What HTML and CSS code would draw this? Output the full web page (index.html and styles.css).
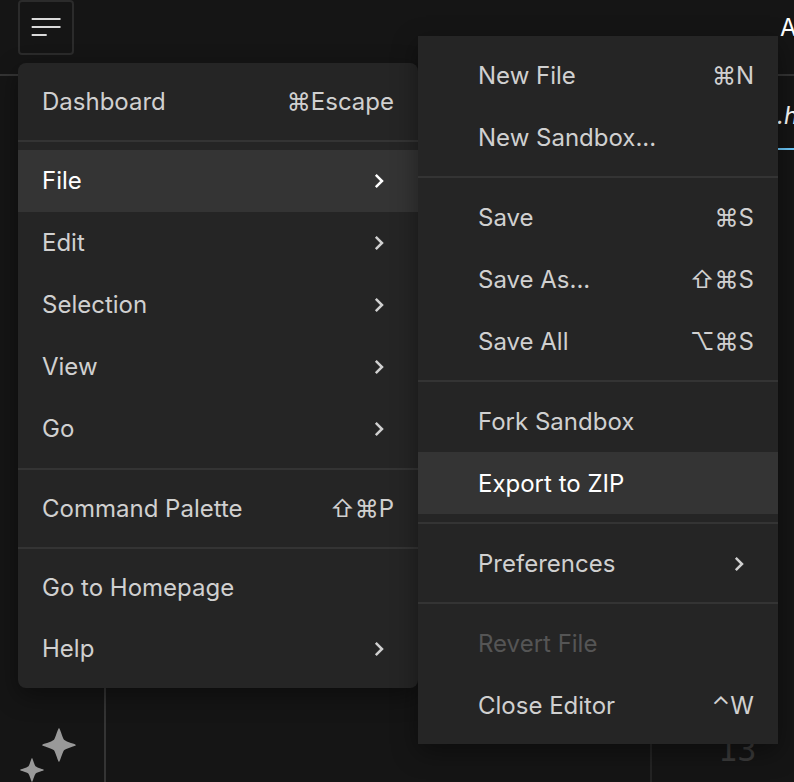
FILE: index.html
```html
<!DOCTYPE html>
<html lang="en">
<head>
<meta charset="utf-8">
<title>Sandbox editor</title>
<link rel="stylesheet" href="styles.css">
</head>
<body>
<svg class="sprite" aria-hidden="true">
  <symbol id="chevron" viewBox="0 0 10 16"><path d="M1.800 1.800 8 8l-6.200 6.200" fill="none" stroke="currentColor" stroke-width="2.500"/></symbol>
</svg>
<div class="app">
  <header class="topbar">
    <button class="menu-button" type="button" aria-label="Menu" aria-expanded="true">
      <svg viewBox="0 0 30 20" width="30" height="20"><path d="M.7 1h28.800M.7 9h28.800M.7 17h15" stroke="currentColor" stroke-width="2"/></svg>
    </button>
    <span class="topbar__title">A</span>
  </header>
  <main class="workspace">
    <aside class="activity">
      <svg class="sparkles" viewBox="0 0 60 56" width="60" height="56" fill="currentColor">
        <path d="M41 0c.9 0 3.200 9 5 11.700C48.500 14 58 16 58 17s-9.500 3-12 5.300C44.200 25 41.900 34 41 34s-3.200-9-5-11.700C33.500 20 24 18 24 17s9.500-3 12-5.300C37.800 9 40.100 0 41 0Z"/>
        <path d="M14 30c.6 0 2.200 6.400 3.500 8.300C19.300 39.900 26 41.300 26 42s-6.700 2.100-8.500 3.700C16.200 47.600 14.600 54 14 54s-2.200-6.400-3.500-8.300C8.700 44.100 2 42.700 2 42s6.700-2.100 8.500-3.700C11.800 36.400 13.400 30 14 30Z"/>
      </svg>
    </aside>
    <section class="explorer"></section>
    <section class="editor">
      <div class="tabs"><span class="tab">index.html</span></div>
      <div class="code"><span class="line-number">13</span></div>
    </section>
  </main>

  <nav class="menu menu--main" aria-label="Main menu">
    <div class="group">
      <button class="item" type="button">Dashboard<kbd>⌘Escape</kbd></button>
    </div>
    <div class="group">
      <button class="item item--parent item--active" type="button">File<svg class="chevron"><use href="#chevron"/></svg></button>
      <button class="item item--parent" type="button">Edit<svg class="chevron"><use href="#chevron"/></svg></button>
      <button class="item item--parent" type="button">Selection<svg class="chevron"><use href="#chevron"/></svg></button>
      <button class="item item--parent" type="button">View<svg class="chevron"><use href="#chevron"/></svg></button>
      <button class="item item--parent" type="button">Go<svg class="chevron"><use href="#chevron"/></svg></button>
    </div>
    <div class="group">
      <button class="item" type="button">Command Palette<kbd>⇧⌘P</kbd></button>
    </div>
    <div class="group">
      <button class="item" type="button">Go to Homepage</button>
      <button class="item item--parent" type="button">Help<svg class="chevron"><use href="#chevron"/></svg></button>
    </div>
  </nav>

  <nav class="menu menu--sub" aria-label="File">
    <div class="group">
      <button class="item" type="button">New File<kbd>⌘N</kbd></button>
      <button class="item" type="button">New Sandbox...</button>
    </div>
    <div class="group">
      <button class="item" type="button">Save<kbd>⌘S</kbd></button>
      <button class="item" type="button">Save As...<kbd>⇧⌘S</kbd></button>
      <button class="item" type="button">Save All<kbd>⌥⌘S</kbd></button>
    </div>
    <div class="group">
      <button class="item" type="button">Fork Sandbox</button>
      <button class="item item--active" type="button">Export to ZIP</button>
    </div>
    <div class="group">
      <button class="item item--parent" type="button">Preferences<svg class="chevron"><use href="#chevron"/></svg></button>
    </div>
    <div class="group">
      <button class="item" type="button" disabled>Revert File</button>
      <button class="item" type="button">Close Editor<kbd>⌃W</kbd></button>
    </div>
  </nav>
</div>
</body>
</html>
```
FILE: styles.css
```css
* { box-sizing: border-box; }

body {
  margin: 0;
  background: #151515;
  color: #d4d4d4;
  font: 24px/32px Inter, "Liberation Sans", sans-serif;
}

.sprite { display: none; }

.app {
  position: relative;
  display: flex;
  flex-direction: column;
  height: 100vh;
  overflow: hidden;
}

.topbar {
  display: flex;
  flex: none;
  align-items: flex-start;
  justify-content: space-between;
  height: 76px;
  padding-left: 18px;
  border-bottom: 2px solid #343434;
}

.menu-button {
  display: grid;
  place-items: center;
  width: 56px;
  height: 55px;
  padding: 0;
  border: 2px solid #2b2b2b;
  border-radius: 4px;
  background: none;
  color: #d9d9d9;
}

.topbar__title {
  width: 14px;
  padding-top: 12px;
  color: #fff;
  white-space: nowrap;
}

.workspace {
  display: grid;
  flex: 1;
  grid-template-columns: 106px 546px 1fr;
  min-height: 0;
}

.activity {
  display: flex;
  align-items: flex-end;
  padding-left: 18px;
  border-right: 2px solid #343434;
  color: #999;
}

.sparkles { display: block; margin-bottom: -2px; }

.explorer { border-right: 2px solid #242424; }

.editor {
  display: flex;
  flex-direction: column;
  justify-content: space-between;
  min-width: 0;
  overflow: hidden;
}

.tabs {
  height: 74px;
  padding: 24px 0 0 64px;
  border-bottom: 2px solid #6cc8fa;
  color: #fff;
  font-style: italic;
  white-space: nowrap;
}

.code {
  padding: 0 0 14px 66px;
  color: #3a3a3a;
  font: 32px/36px "DejaVu Sans Mono", monospace;
}

.menu {
  position: absolute;
  padding: 8px 0;
  background: #252525;
  box-shadow: 0 8px 24px rgba(0, 0, 0, .4);
}

.menu--main {
  top: 63px;
  left: 18px;
  width: 400px;
  border-radius: 8px;
}

.menu--sub {
  top: 36px;
  left: 418px;
  width: 360px;
}

.group + .group {
  margin-top: 8px;
  padding-top: 8px;
  border-top: 2px solid #343434;
}

.item {
  display: flex;
  align-items: center;
  justify-content: space-between;
  width: 100%;
  height: 61px;
  padding: 0 24px;
  border: 0;
  background: none;
  color: #d0d0d0;
  font: inherit;
  text-align: left;
}

.item--parent { height: 62px; padding-right: 34px; }

.menu--sub .item { height: 62px; padding-top: 2px; padding-left: 60px; }

.item--active { background: #343434; color: #fff; }

.item:disabled { color: #555; }

.item kbd { font: inherit; }

.chevron { width: 10px; height: 16px; }
```
